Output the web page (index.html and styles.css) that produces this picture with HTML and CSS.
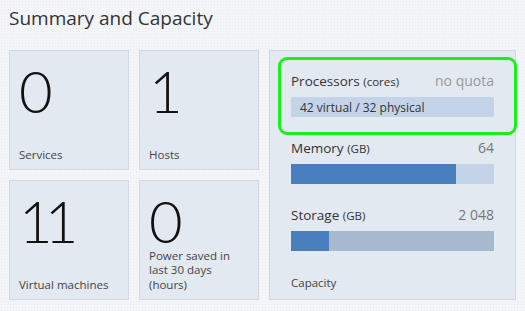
FILE: index.html
```html
<!DOCTYPE html>
<html>
<head>
	<meta charset="utf-8">
	<title>Summary and Capacity</title>
	<link rel="stylesheet" href="styles.css">
</head>
<body>
	<div class="page">
		<h1 class="heading">Summary and Capacity</h1>

		<div class="summary">
			<div class="tiles">
				<div class="tile">
					<div class="count">0</div>
					<div class="label">Services</div>
				</div>
				<div class="tile">
					<div class="count">1</div>
					<div class="label">Hosts</div>
				</div>
				<div class="tile">
					<div class="count">11</div>
					<div class="label">Virtual machines</div>
				</div>
				<div class="tile">
					<div class="count">0</div>
					<div class="label">Power saved in<br>last 30 days<br>(hours)</div>
				</div>
			</div>

			<div class="capacity">
				<div class="highlight"></div>

				<div class="metric">
					<div class="metric-head">
						<span class="name">Processors <small>(cores)</small></span>
						<span class="value muted">no quota</span>
					</div>
					<div class="bar">
						<span class="bar-text">42 virtual / 32 physical</span>
					</div>
				</div>

				<div class="metric">
					<div class="metric-head">
						<span class="name">Memory <small>(GB)</small></span>
						<span class="value">64</span>
					</div>
					<div class="bar">
						<div class="fill" style="width: 81.5%"></div>
					</div>
				</div>

				<div class="metric">
					<div class="metric-head">
						<span class="name">Storage <small>(GB)</small></span>
						<span class="value">2 048</span>
					</div>
					<div class="bar bar-used">
						<div class="fill" style="width: 18.5%"></div>
					</div>
				</div>

				<div class="label panel-label">Capacity</div>
			</div>
		</div>
	</div>
</body>
</html>
```

FILE: styles.css
```css
*{
	padding: 0;
	margin: 0;
	box-sizing: border-box;
}
body{
	font-family: "Open Sans", "Noto Sans", sans-serif;
	color: #333;
	background-color: #f3f5f9;
	background-image: radial-gradient(#e8ecf2 0.8px, transparent 0.9px);
	background-size: 3px 3px;
	width: 525px;
	height: 311px;
	overflow: hidden;
}
.page{
	padding: 0 9px;
}
.heading{
	font-size: 19px;
	font-weight: 400;
	line-height: 24px;
	padding-top: 6px;
	height: 50px;
	color: #333;
}
.summary{
	display: flex;
	gap: 10px;
}
.tiles{
	display: grid;
	grid-template-columns: 120px 120px;
	grid-template-rows: 120px 120px;
	gap: 10px;
}
.tile{
	background: #e3e9f1;
	border: 1px solid #d0d9e3;
	padding: 16px 9px 7px 9px;
	display: flex;
	flex-direction: column;
	justify-content: space-between;
}
.count{
	font-family: "Lato Light", "Lato", sans-serif;
	font-size: 58px;
	font-weight: 300;
	line-height: 48px;
	color: #111;
	letter-spacing: -8px;
}
.label{
	font-size: 11.5px;
	line-height: 14.5px;
	color: #444;
}
.capacity{
	position: relative;
	width: 250px;
	height: 250px;
	background: #e3e9f1;
	border: 1px solid #d0d9e3;
	padding: 20px 21px 8px 21px;
	display: flex;
	flex-direction: column;
}
.highlight{
	position: absolute;
	left: 8px;
	top: 6px;
	width: 239px;
	height: 78px;
	border: 3px solid #1cf01c;
	border-radius: 9px;
}
.metric{
	margin-bottom: 21px;
}
.metric-head{
	display: flex;
	justify-content: space-between;
	align-items: baseline;
	font-size: 13.5px;
	line-height: 20px;
	margin-bottom: 5px;
}
.metric-head small{
	font-size: 11.5px;
}
.value{
	color: #777;
	font-size: 14px;
}
.muted{
	color: #999;
}
.bar{
	height: 20px;
	background: #c4d4e8;
	display: flex;
	align-items: center;
}
.bar-used{
	background: #a7b9cf;
}
.bar-text{
	font-size: 12px;
	padding-left: 9px;
	color: #333;
}
.fill{
	height: 100%;
	background: #4a7fbd;
}
.panel-label{
	margin-top: auto;
	line-height: 16px;
}
```
